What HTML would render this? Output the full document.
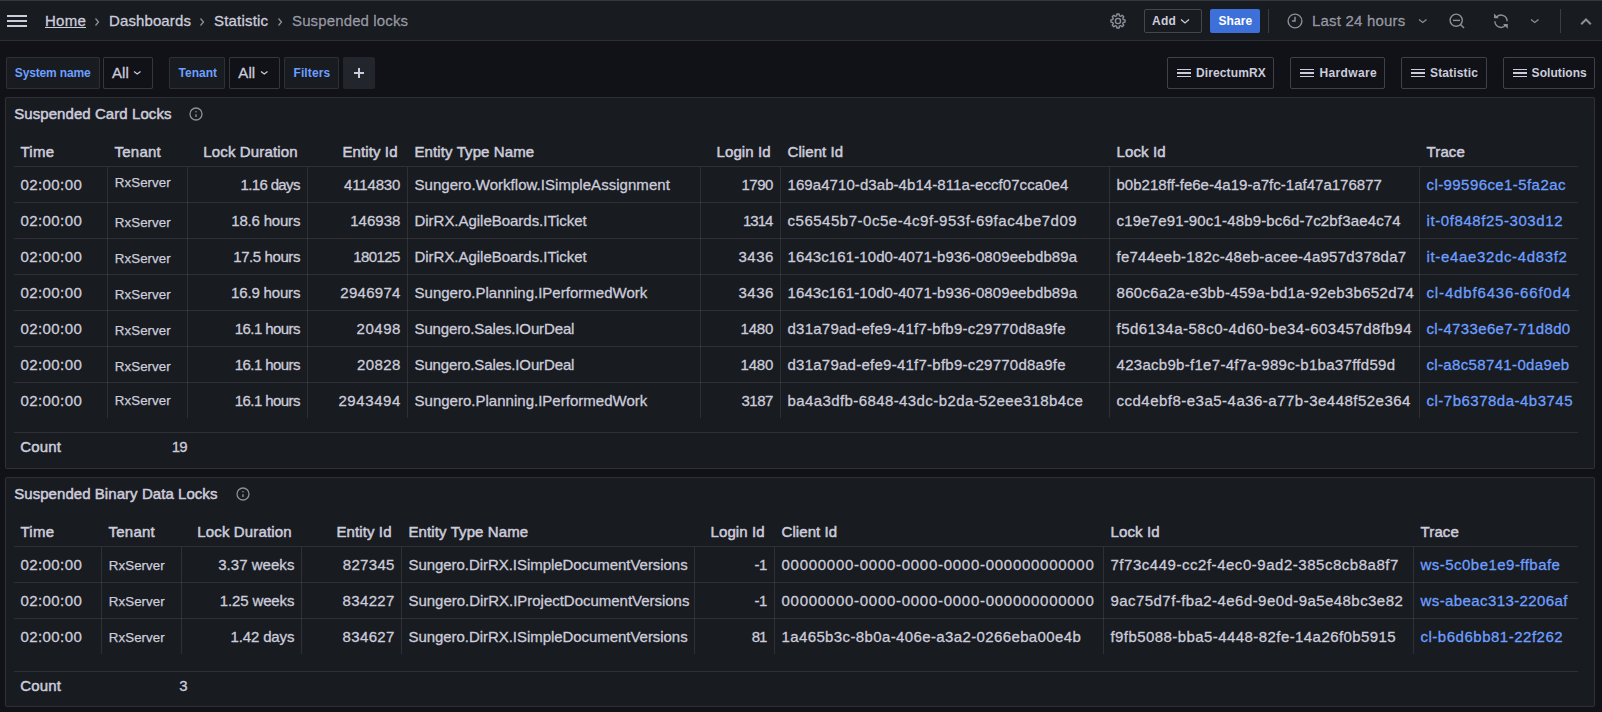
<!DOCTYPE html><html><head><meta charset="utf-8"><style>
html,body{margin:0;padding:0;}
body{width:1602px;height:712px;overflow:hidden;position:relative;background:#111217;font-family:"Liberation Sans",sans-serif;}
.t{position:absolute;line-height:normal;white-space:pre;}
svg{overflow:visible}
</style></head><body>
<div style="position:absolute;left:0px;top:0px;width:1602px;height:41px;background:#181b1f;"></div>
<div style="position:absolute;left:0px;top:0px;width:1602px;height:1px;background:#34373d;"></div>
<div style="position:absolute;left:0px;top:40px;width:1602px;height:1px;background:#2c2e33;"></div>
<div style="position:absolute;left:7px;top:15px;width:20px;height:2px;background:#ccccdc;"></div>
<div style="position:absolute;left:7px;top:20px;width:20px;height:2px;background:#ccccdc;"></div>
<div style="position:absolute;left:7px;top:25px;width:20px;height:2px;background:#ccccdc;"></div>
<div class="t" style="left:45.00px;top:12px;font-size:15px;font-weight:400;color:#ccccdc;letter-spacing:0.246px;-webkit-text-stroke:0.3px #ccccdc;text-decoration:underline;text-underline-offset:1px;text-decoration-thickness:1px;">Home</div>
<svg style="position:absolute;left:93px;top:17px" width="8" height="10" viewBox="0 0 8 10"><polyline points="2.5,1.5 5.5,5 2.5,8.5" fill="none" stroke="rgba(204,204,220,0.65)" stroke-width="1.3"/></svg>
<div class="t" style="left:109.00px;top:12px;font-size:15px;font-weight:400;color:#ccccdc;letter-spacing:0.111px;-webkit-text-stroke:0.3px #ccccdc;">Dashboards</div>
<svg style="position:absolute;left:198px;top:17px" width="8" height="10" viewBox="0 0 8 10"><polyline points="2.5,1.5 5.5,5 2.5,8.5" fill="none" stroke="rgba(204,204,220,0.65)" stroke-width="1.3"/></svg>
<div class="t" style="left:214.00px;top:12px;font-size:15px;font-weight:400;color:#ccccdc;letter-spacing:0.198px;-webkit-text-stroke:0.3px #ccccdc;">Statistic</div>
<svg style="position:absolute;left:276px;top:17px" width="8" height="10" viewBox="0 0 8 10"><polyline points="2.5,1.5 5.5,5 2.5,8.5" fill="none" stroke="rgba(204,204,220,0.65)" stroke-width="1.3"/></svg>
<div class="t" style="left:292.00px;top:12px;font-size:15px;font-weight:400;color:rgba(204,204,220,0.65);letter-spacing:0.130px;-webkit-text-stroke:0.3px rgba(204,204,220,0.65);">Suspended locks</div>
<svg style="position:absolute;left:1108px;top:11px" width="20" height="20" viewBox="0 0 20 20"><path d="M8.56,4.80 L8.93,2.98 L11.07,2.98 L11.44,4.80 L12.66,5.30 L14.21,4.28 L15.72,5.79 L14.70,7.34 L15.20,8.56 L17.02,8.93 L17.02,11.07 L15.20,11.44 L14.70,12.66 L15.72,14.21 L14.21,15.72 L12.66,14.70 L11.44,15.20 L11.07,17.02 L8.93,17.02 L8.56,15.20 L7.34,14.70 L5.79,15.72 L4.28,14.21 L5.30,12.66 L4.80,11.44 L2.98,11.07 L2.98,8.93 L4.80,8.56 L5.30,7.34 L4.28,5.79 L5.79,4.28 L7.34,5.30Z" fill="none" stroke="rgba(204,204,220,0.65)" stroke-width="1.4" stroke-linejoin="round"/><circle cx="10" cy="10" r="2.6" fill="none" stroke="rgba(204,204,220,0.65)" stroke-width="1.4"/></svg>
<div style="position:absolute;left:1144px;top:9px;width:58px;height:24px;box-sizing:border-box;border:1px solid rgba(204,204,220,0.25);border-radius:2px;"></div>
<div class="t" style="left:1152.00px;top:14px;font-size:12px;font-weight:700;color:#ccccdc;letter-spacing:0.224px;">Add</div>
<svg style="position:absolute;left:1180px;top:17.5px" width="10" height="6.5" viewBox="0 0 10 6.5"><polyline points="1,1.5 5.0,5.0 9,1.5" fill="none" stroke="#ccccdc" stroke-width="1.3"/></svg>
<div style="position:absolute;left:1210px;top:9px;width:50px;height:24px;background:#3d71d9;border-radius:2px;"></div>
<div class="t" style="left:1218.50px;top:14px;font-size:12px;font-weight:700;color:#ffffff;letter-spacing:0.108px;">Share</div>
<div style="position:absolute;left:1268px;top:9px;width:1px;height:24px;background:rgba(204,204,220,0.2);"></div>
<svg style="position:absolute;left:1285px;top:11px" width="20" height="20" viewBox="0 0 20 20"><circle cx="10" cy="10" r="6.9" fill="none" stroke="rgba(204,204,220,0.65)" stroke-width="1.4"/><polyline points="10,5.8 10,10 7,10" fill="none" stroke="rgba(204,204,220,0.65)" stroke-width="1.5"/></svg>
<div class="t" style="left:1312.00px;top:12px;font-size:15px;font-weight:400;color:rgba(204,204,220,0.65);letter-spacing:0.200px;-webkit-text-stroke:0.3px rgba(204,204,220,0.65);">Last 24 hours</div>
<svg style="position:absolute;left:1418px;top:18px" width="9.5" height="6" viewBox="0 0 9.5 6"><polyline points="1,1.5 4.75,4.5 8.5,1.5" fill="none" stroke="rgba(204,204,220,0.65)" stroke-width="1.3"/></svg>
<svg style="position:absolute;left:1446px;top:10px" width="22" height="22" viewBox="0 0 22 22"><circle cx="10.2" cy="10.2" r="6.1" fill="none" stroke="rgba(204,204,220,0.65)" stroke-width="1.4"/><line x1="7" y1="10.4" x2="14" y2="10.4" stroke="rgba(204,204,220,0.65)" stroke-width="1.4"/><line x1="14.8" y1="14.8" x2="18" y2="18" stroke="rgba(204,204,220,0.65)" stroke-width="1.5"/></svg>
<svg style="position:absolute;left:1491px;top:11px" width="20" height="20" viewBox="0 0 20 20"><path d="M5.7,5.8 A6.1,6.1 0 0 1 16.1,10.3" fill="none" stroke="rgba(204,204,220,0.65)" stroke-width="1.4"/><path d="M3.9,10.3 A6.1,6.1 0 0 0 14.3,14.6" fill="none" stroke="rgba(204,204,220,0.65)" stroke-width="1.4"/><polygon points="3,2.4 3,7.2 7.8,7.2" fill="rgba(204,204,220,0.65)"/><polygon points="16.8,17.8 16.8,13 12,13" fill="rgba(204,204,220,0.65)"/></svg>
<svg style="position:absolute;left:1530px;top:18px" width="9.5" height="6" viewBox="0 0 9.5 6"><polyline points="1,1.5 4.75,4.5 8.5,1.5" fill="none" stroke="rgba(204,204,220,0.65)" stroke-width="1.3"/></svg>
<div style="position:absolute;left:1560px;top:9px;width:1px;height:24px;background:rgba(204,204,220,0.2);"></div>
<svg style="position:absolute;left:1578px;top:16px" width="16" height="11" viewBox="0 0 16 11"><polyline points="3.2,8.3 8,3.5 12.8,8.3" fill="none" stroke="rgba(204,204,220,0.65)" stroke-width="2"/></svg>
<div style="position:absolute;left:6px;top:57px;width:94px;height:32px;box-sizing:border-box;background:#181b1f;border:1px solid rgba(204,204,220,0.12);border-radius:2px;"></div>
<div class="t" style="left:14.80px;top:66px;font-size:12px;font-weight:700;color:#6e9fff;letter-spacing:-0.152px;">System name</div>
<div style="position:absolute;left:103px;top:57px;width:50px;height:32px;box-sizing:border-box;background:#111217;border:1px solid rgba(204,204,220,0.20);border-radius:2px;"></div>
<div class="t" style="left:112.00px;top:64px;font-size:15px;font-weight:400;color:#ccccdc;letter-spacing:0.109px;-webkit-text-stroke:0.3px #ccccdc;">All</div>
<svg style="position:absolute;left:133px;top:70.3px" width="8.5" height="5.5" viewBox="0 0 8.5 5.5"><polyline points="1,1.5 4.25,4.0 7.5,1.5" fill="none" stroke="#ccccdc" stroke-width="1.2"/></svg>
<div style="position:absolute;left:169px;top:57px;width:56px;height:32px;box-sizing:border-box;background:#181b1f;border:1px solid rgba(204,204,220,0.12);border-radius:2px;"></div>
<div class="t" style="left:178.50px;top:66px;font-size:12px;font-weight:700;color:#6e9fff;letter-spacing:0.008px;">Tenant</div>
<div style="position:absolute;left:229px;top:57px;width:51px;height:32px;box-sizing:border-box;background:#111217;border:1px solid rgba(204,204,220,0.20);border-radius:2px;"></div>
<div class="t" style="left:238.30px;top:64px;font-size:15px;font-weight:400;color:#ccccdc;letter-spacing:0.109px;-webkit-text-stroke:0.3px #ccccdc;">All</div>
<svg style="position:absolute;left:260px;top:70.3px" width="8.5" height="5.5" viewBox="0 0 8.5 5.5"><polyline points="1,1.5 4.25,4.0 7.5,1.5" fill="none" stroke="#ccccdc" stroke-width="1.2"/></svg>
<div style="position:absolute;left:284px;top:57px;width:55px;height:32px;box-sizing:border-box;background:#181b1f;border:1px solid rgba(204,204,220,0.12);border-radius:2px;"></div>
<div class="t" style="left:293.50px;top:66px;font-size:12px;font-weight:700;color:#6e9fff;letter-spacing:0.098px;">Filters</div>
<div style="position:absolute;left:343px;top:57px;width:32px;height:32px;background:#22252b;border-radius:2px;"></div>
<div style="position:absolute;left:354px;top:72px;width:10px;height:2px;background:#ccccdc;"></div>
<div style="position:absolute;left:358px;top:68px;width:2px;height:10px;background:#ccccdc;"></div>
<div style="position:absolute;left:1167px;top:57px;width:107px;height:32px;box-sizing:border-box;border:1px solid rgba(204,204,220,0.25);border-radius:2px;"></div>
<div style="position:absolute;left:1177px;top:68.8px;width:14px;height:1.4px;background:#ccccdc;"></div>
<div style="position:absolute;left:1177px;top:72.3px;width:14px;height:1.4px;background:#ccccdc;"></div>
<div style="position:absolute;left:1177px;top:75.8px;width:14px;height:1.4px;background:#ccccdc;"></div>
<div class="t" style="left:1196.00px;top:66px;font-size:12px;font-weight:700;color:#ccccdc;letter-spacing:0.121px;">DirectumRX</div>
<div style="position:absolute;left:1290px;top:57px;width:95px;height:32px;box-sizing:border-box;border:1px solid rgba(204,204,220,0.25);border-radius:2px;"></div>
<div style="position:absolute;left:1300px;top:68.8px;width:14px;height:1.4px;background:#ccccdc;"></div>
<div style="position:absolute;left:1300px;top:72.3px;width:14px;height:1.4px;background:#ccccdc;"></div>
<div style="position:absolute;left:1300px;top:75.8px;width:14px;height:1.4px;background:#ccccdc;"></div>
<div class="t" style="left:1319.50px;top:66px;font-size:12px;font-weight:700;color:#ccccdc;letter-spacing:0.350px;">Hardware</div>
<div style="position:absolute;left:1401px;top:57px;width:86px;height:32px;box-sizing:border-box;border:1px solid rgba(204,204,220,0.25);border-radius:2px;"></div>
<div style="position:absolute;left:1411px;top:68.8px;width:14px;height:1.4px;background:#ccccdc;"></div>
<div style="position:absolute;left:1411px;top:72.3px;width:14px;height:1.4px;background:#ccccdc;"></div>
<div style="position:absolute;left:1411px;top:75.8px;width:14px;height:1.4px;background:#ccccdc;"></div>
<div class="t" style="left:1430.00px;top:66px;font-size:12px;font-weight:700;color:#ccccdc;letter-spacing:0.146px;">Statistic</div>
<div style="position:absolute;left:1503px;top:57px;width:92px;height:32px;box-sizing:border-box;border:1px solid rgba(204,204,220,0.25);border-radius:2px;"></div>
<div style="position:absolute;left:1513px;top:68.8px;width:14px;height:1.4px;background:#ccccdc;"></div>
<div style="position:absolute;left:1513px;top:72.3px;width:14px;height:1.4px;background:#ccccdc;"></div>
<div style="position:absolute;left:1513px;top:75.8px;width:14px;height:1.4px;background:#ccccdc;"></div>
<div class="t" style="left:1531.60px;top:66px;font-size:12px;font-weight:700;color:#ccccdc;letter-spacing:0.059px;">Solutions</div>
<div style="position:absolute;left:5px;top:97px;width:1590px;height:372px;box-sizing:border-box;background:#181b1f;border:1px solid rgba(204,204,220,0.12);border-radius:2px;"></div>
<div class="t" style="left:14.20px;top:105px;font-size:15px;font-weight:400;color:#ccccdc;letter-spacing:0.070px;-webkit-text-stroke:0.5px #ccccdc;">Suspended Card Locks</div>
<svg style="position:absolute;left:188px;top:106px" width="16" height="16" viewBox="0 0 16 16"><circle cx="8" cy="8" r="6" fill="none" stroke="rgba(204,204,220,0.65)" stroke-width="1.3"/><line x1="8" y1="8.2" x2="8" y2="11" stroke="rgba(204,204,220,0.65)" stroke-width="1.4"/><circle cx="8" cy="5.7" r="0.8" fill="rgba(204,204,220,0.65)"/></svg>
<div style="position:absolute;left:14px;top:166px;width:1564px;height:1px;background:rgba(204,204,220,0.12);"></div>
<div style="position:absolute;left:14px;top:202px;width:1564px;height:1px;background:rgba(204,204,220,0.12);"></div>
<div style="position:absolute;left:14px;top:238px;width:1564px;height:1px;background:rgba(204,204,220,0.12);"></div>
<div style="position:absolute;left:14px;top:274px;width:1564px;height:1px;background:rgba(204,204,220,0.12);"></div>
<div style="position:absolute;left:14px;top:310px;width:1564px;height:1px;background:rgba(204,204,220,0.12);"></div>
<div style="position:absolute;left:14px;top:346px;width:1564px;height:1px;background:rgba(204,204,220,0.12);"></div>
<div style="position:absolute;left:14px;top:382px;width:1564px;height:1px;background:rgba(204,204,220,0.12);"></div>
<div style="position:absolute;left:107px;top:167px;width:1px;height:251px;background:rgba(204,204,220,0.12);"></div>
<div style="position:absolute;left:187px;top:167px;width:1px;height:251px;background:rgba(204,204,220,0.12);"></div>
<div style="position:absolute;left:307px;top:167px;width:1px;height:251px;background:rgba(204,204,220,0.12);"></div>
<div style="position:absolute;left:407px;top:167px;width:1px;height:251px;background:rgba(204,204,220,0.12);"></div>
<div style="position:absolute;left:700px;top:167px;width:1px;height:251px;background:rgba(204,204,220,0.12);"></div>
<div style="position:absolute;left:780px;top:167px;width:1px;height:251px;background:rgba(204,204,220,0.12);"></div>
<div style="position:absolute;left:1109px;top:167px;width:1px;height:251px;background:rgba(204,204,220,0.12);"></div>
<div style="position:absolute;left:1419px;top:167px;width:1px;height:251px;background:rgba(204,204,220,0.12);"></div>
<div style="position:absolute;left:14px;top:432px;width:1564px;height:1px;background:rgba(204,204,220,0.12);"></div>
<div class="t" style="left:20.50px;top:143px;font-size:15px;font-weight:400;color:#ccccdc;letter-spacing:0.253px;-webkit-text-stroke:0.5px #ccccdc;">Time</div>
<div class="t" style="left:114.50px;top:143px;font-size:15px;font-weight:400;color:#ccccdc;letter-spacing:0.237px;-webkit-text-stroke:0.5px #ccccdc;">Tenant</div>
<div class="t" style="left:297.64px;top:143px;font-size:15px;font-weight:400;color:#ccccdc;letter-spacing:0.135px;transform:translateX(-100%);-webkit-text-stroke:0.5px #ccccdc;">Lock Duration</div>
<div class="t" style="left:397.61px;top:143px;font-size:15px;font-weight:400;color:#ccccdc;letter-spacing:0.114px;transform:translateX(-100%);-webkit-text-stroke:0.5px #ccccdc;">Entity Id</div>
<div class="t" style="left:414.50px;top:143px;font-size:15px;font-weight:400;color:#ccccdc;letter-spacing:0.103px;-webkit-text-stroke:0.5px #ccccdc;">Entity Type Name</div>
<div class="t" style="left:770.57px;top:143px;font-size:15px;font-weight:400;color:#ccccdc;letter-spacing:0.070px;transform:translateX(-100%);-webkit-text-stroke:0.5px #ccccdc;">Login Id</div>
<div class="t" style="left:787.50px;top:143px;font-size:15px;font-weight:400;color:#ccccdc;letter-spacing:0.075px;-webkit-text-stroke:0.5px #ccccdc;">Client Id</div>
<div class="t" style="left:1116.50px;top:143px;font-size:15px;font-weight:400;color:#ccccdc;letter-spacing:0.113px;-webkit-text-stroke:0.5px #ccccdc;">Lock Id</div>
<div class="t" style="left:1426.50px;top:143px;font-size:15px;font-weight:400;color:#ccccdc;letter-spacing:0.138px;-webkit-text-stroke:0.5px #ccccdc;">Trace</div>
<div class="t" style="left:20.50px;top:176px;font-size:15px;font-weight:400;color:#ccccdc;letter-spacing:0.411px;-webkit-text-stroke:0.3px #ccccdc;">02:00:00</div>
<div class="t" style="left:114.80px;top:175px;font-size:13.3px;font-weight:400;color:#ccccdc;letter-spacing:0.074px;-webkit-text-stroke:0.25px #ccccdc;">RxServer</div>
<div class="t" style="left:299.75px;top:176px;font-size:15px;font-weight:400;color:#ccccdc;letter-spacing:-0.649px;transform:translateX(-100%);-webkit-text-stroke:0.3px #ccccdc;">1.16 days</div>
<div class="t" style="left:400.24px;top:176px;font-size:15px;font-weight:400;color:#ccccdc;letter-spacing:-0.160px;transform:translateX(-100%);-webkit-text-stroke:0.3px #ccccdc;">4114830</div>
<div class="t" style="left:414.50px;top:176px;font-size:15px;font-weight:400;color:#ccccdc;letter-spacing:0.040px;-webkit-text-stroke:0.3px #ccccdc;">Sungero.Workflow.ISimpleAssignment</div>
<div class="t" style="left:772.92px;top:176px;font-size:15px;font-weight:400;color:#ccccdc;letter-spacing:-0.478px;transform:translateX(-100%);-webkit-text-stroke:0.3px #ccccdc;">1790</div>
<div class="t" style="left:787.50px;top:176px;font-size:15px;font-weight:400;color:#ccccdc;letter-spacing:0.073px;-webkit-text-stroke:0.3px #ccccdc;">169a4710-d3ab-4b14-811a-eccf07cca0e4</div>
<div class="t" style="left:1116.50px;top:176px;font-size:15px;font-weight:400;color:#ccccdc;letter-spacing:0.012px;-webkit-text-stroke:0.3px #ccccdc;">b0b218ff-fe6e-4a19-a7fc-1af47a176877</div>
<div class="t" style="left:1426.50px;top:176px;font-size:15px;font-weight:400;color:#6e9fff;letter-spacing:0.421px;-webkit-text-stroke:0.3px #6e9fff;">cl-99596ce1-5fa2ac</div>
<div class="t" style="left:20.50px;top:212px;font-size:15px;font-weight:400;color:#ccccdc;letter-spacing:0.411px;-webkit-text-stroke:0.3px #ccccdc;">02:00:00</div>
<div class="t" style="left:114.80px;top:215px;font-size:13.3px;font-weight:400;color:#ccccdc;letter-spacing:0.074px;-webkit-text-stroke:0.25px #ccccdc;">RxServer</div>
<div class="t" style="left:300.21px;top:212px;font-size:15px;font-weight:400;color:#ccccdc;letter-spacing:-0.192px;transform:translateX(-100%);-webkit-text-stroke:0.3px #ccccdc;">18.6 hours</div>
<div class="t" style="left:400.42px;top:212px;font-size:15px;font-weight:400;color:#ccccdc;letter-spacing:0.017px;transform:translateX(-100%);-webkit-text-stroke:0.3px #ccccdc;">146938</div>
<div class="t" style="left:414.50px;top:212px;font-size:15px;font-weight:400;color:#ccccdc;letter-spacing:-0.026px;-webkit-text-stroke:0.3px #ccccdc;">DirRX.AgileBoards.ITicket</div>
<div class="t" style="left:772.44px;top:212px;font-size:15px;font-weight:400;color:#ccccdc;letter-spacing:-0.961px;transform:translateX(-100%);-webkit-text-stroke:0.3px #ccccdc;">1314</div>
<div class="t" style="left:787.50px;top:212px;font-size:15px;font-weight:400;color:#ccccdc;letter-spacing:0.518px;-webkit-text-stroke:0.3px #ccccdc;">c56545b7-0c5e-4c9f-953f-69fac4be7d09</div>
<div class="t" style="left:1116.50px;top:212px;font-size:15px;font-weight:400;color:#ccccdc;letter-spacing:0.161px;-webkit-text-stroke:0.3px #ccccdc;">c19e7e91-90c1-48b9-bc6d-7c2bf3ae4c74</div>
<div class="t" style="left:1426.50px;top:212px;font-size:15px;font-weight:400;color:#6e9fff;letter-spacing:0.592px;-webkit-text-stroke:0.3px #6e9fff;">it-0f848f25-303d12</div>
<div class="t" style="left:20.50px;top:248px;font-size:15px;font-weight:400;color:#ccccdc;letter-spacing:0.411px;-webkit-text-stroke:0.3px #ccccdc;">02:00:00</div>
<div class="t" style="left:114.80px;top:251px;font-size:13.3px;font-weight:400;color:#ccccdc;letter-spacing:0.074px;-webkit-text-stroke:0.25px #ccccdc;">RxServer</div>
<div class="t" style="left:299.99px;top:248px;font-size:15px;font-weight:400;color:#ccccdc;letter-spacing:-0.414px;transform:translateX(-100%);-webkit-text-stroke:0.3px #ccccdc;">17.5 hours</div>
<div class="t" style="left:399.83px;top:248px;font-size:15px;font-weight:400;color:#ccccdc;letter-spacing:-0.573px;transform:translateX(-100%);-webkit-text-stroke:0.3px #ccccdc;">180125</div>
<div class="t" style="left:414.50px;top:248px;font-size:15px;font-weight:400;color:#ccccdc;letter-spacing:-0.026px;-webkit-text-stroke:0.3px #ccccdc;">DirRX.AgileBoards.ITicket</div>
<div class="t" style="left:773.95px;top:248px;font-size:15px;font-weight:400;color:#ccccdc;letter-spacing:0.545px;transform:translateX(-100%);-webkit-text-stroke:0.3px #ccccdc;">3436</div>
<div class="t" style="left:787.50px;top:248px;font-size:15px;font-weight:400;color:#ccccdc;letter-spacing:0.100px;-webkit-text-stroke:0.3px #ccccdc;">1643c161-10d0-4071-b936-0809eebdb89a</div>
<div class="t" style="left:1116.50px;top:248px;font-size:15px;font-weight:400;color:#ccccdc;letter-spacing:0.244px;-webkit-text-stroke:0.3px #ccccdc;">fe744eeb-182c-48eb-acee-4a957d378da7</div>
<div class="t" style="left:1426.50px;top:248px;font-size:15px;font-weight:400;color:#6e9fff;letter-spacing:0.651px;-webkit-text-stroke:0.3px #6e9fff;">it-e4ae32dc-4d83f2</div>
<div class="t" style="left:20.50px;top:284px;font-size:15px;font-weight:400;color:#ccccdc;letter-spacing:0.411px;-webkit-text-stroke:0.3px #ccccdc;">02:00:00</div>
<div class="t" style="left:114.80px;top:287px;font-size:13.3px;font-weight:400;color:#ccccdc;letter-spacing:0.074px;-webkit-text-stroke:0.25px #ccccdc;">RxServer</div>
<div class="t" style="left:300.22px;top:284px;font-size:15px;font-weight:400;color:#ccccdc;letter-spacing:-0.179px;transform:translateX(-100%);-webkit-text-stroke:0.3px #ccccdc;">16.9 hours</div>
<div class="t" style="left:400.69px;top:284px;font-size:15px;font-weight:400;color:#ccccdc;letter-spacing:0.286px;transform:translateX(-100%);-webkit-text-stroke:0.3px #ccccdc;">2946974</div>
<div class="t" style="left:414.50px;top:284px;font-size:15px;font-weight:400;color:#ccccdc;letter-spacing:0.014px;-webkit-text-stroke:0.3px #ccccdc;">Sungero.Planning.IPerformedWork</div>
<div class="t" style="left:773.95px;top:284px;font-size:15px;font-weight:400;color:#ccccdc;letter-spacing:0.545px;transform:translateX(-100%);-webkit-text-stroke:0.3px #ccccdc;">3436</div>
<div class="t" style="left:787.50px;top:284px;font-size:15px;font-weight:400;color:#ccccdc;letter-spacing:0.100px;-webkit-text-stroke:0.3px #ccccdc;">1643c161-10d0-4071-b936-0809eebdb89a</div>
<div class="t" style="left:1116.50px;top:284px;font-size:15px;font-weight:400;color:#ccccdc;letter-spacing:0.321px;-webkit-text-stroke:0.3px #ccccdc;">860c6a2a-e3bb-459a-bd1a-92eb3b652d74</div>
<div class="t" style="left:1426.50px;top:284px;font-size:15px;font-weight:400;color:#6e9fff;letter-spacing:0.851px;-webkit-text-stroke:0.3px #6e9fff;">cl-4dbf6436-66f0d4</div>
<div class="t" style="left:20.50px;top:320px;font-size:15px;font-weight:400;color:#ccccdc;letter-spacing:0.411px;-webkit-text-stroke:0.3px #ccccdc;">02:00:00</div>
<div class="t" style="left:114.80px;top:323px;font-size:13.3px;font-weight:400;color:#ccccdc;letter-spacing:0.074px;-webkit-text-stroke:0.25px #ccccdc;">RxServer</div>
<div class="t" style="left:299.81px;top:320px;font-size:15px;font-weight:400;color:#ccccdc;letter-spacing:-0.595px;transform:translateX(-100%);-webkit-text-stroke:0.3px #ccccdc;">16.1 hours</div>
<div class="t" style="left:400.94px;top:320px;font-size:15px;font-weight:400;color:#ccccdc;letter-spacing:0.541px;transform:translateX(-100%);-webkit-text-stroke:0.3px #ccccdc;">20498</div>
<div class="t" style="left:414.50px;top:320px;font-size:15px;font-weight:400;color:#ccccdc;letter-spacing:-0.126px;-webkit-text-stroke:0.3px #ccccdc;">Sungero.Sales.IOurDeal</div>
<div class="t" style="left:773.24px;top:320px;font-size:15px;font-weight:400;color:#ccccdc;letter-spacing:-0.164px;transform:translateX(-100%);-webkit-text-stroke:0.3px #ccccdc;">1480</div>
<div class="t" style="left:787.50px;top:320px;font-size:15px;font-weight:400;color:#ccccdc;letter-spacing:0.247px;-webkit-text-stroke:0.3px #ccccdc;">d31a79ad-efe9-41f7-bfb9-c29770d8a9fe</div>
<div class="t" style="left:1116.50px;top:320px;font-size:15px;font-weight:400;color:#ccccdc;letter-spacing:0.494px;-webkit-text-stroke:0.3px #ccccdc;">f5d6134a-58c0-4d60-be34-603457d8fb94</div>
<div class="t" style="left:1426.50px;top:320px;font-size:15px;font-weight:400;color:#6e9fff;letter-spacing:0.357px;-webkit-text-stroke:0.3px #6e9fff;">cl-4733e6e7-71d8d0</div>
<div class="t" style="left:20.50px;top:356px;font-size:15px;font-weight:400;color:#ccccdc;letter-spacing:0.411px;-webkit-text-stroke:0.3px #ccccdc;">02:00:00</div>
<div class="t" style="left:114.80px;top:359px;font-size:13.3px;font-weight:400;color:#ccccdc;letter-spacing:0.074px;-webkit-text-stroke:0.25px #ccccdc;">RxServer</div>
<div class="t" style="left:299.81px;top:356px;font-size:15px;font-weight:400;color:#ccccdc;letter-spacing:-0.595px;transform:translateX(-100%);-webkit-text-stroke:0.3px #ccccdc;">16.1 hours</div>
<div class="t" style="left:400.83px;top:356px;font-size:15px;font-weight:400;color:#ccccdc;letter-spacing:0.433px;transform:translateX(-100%);-webkit-text-stroke:0.3px #ccccdc;">20828</div>
<div class="t" style="left:414.50px;top:356px;font-size:15px;font-weight:400;color:#ccccdc;letter-spacing:-0.126px;-webkit-text-stroke:0.3px #ccccdc;">Sungero.Sales.IOurDeal</div>
<div class="t" style="left:773.24px;top:356px;font-size:15px;font-weight:400;color:#ccccdc;letter-spacing:-0.164px;transform:translateX(-100%);-webkit-text-stroke:0.3px #ccccdc;">1480</div>
<div class="t" style="left:787.50px;top:356px;font-size:15px;font-weight:400;color:#ccccdc;letter-spacing:0.247px;-webkit-text-stroke:0.3px #ccccdc;">d31a79ad-efe9-41f7-bfb9-c29770d8a9fe</div>
<div class="t" style="left:1116.50px;top:356px;font-size:15px;font-weight:400;color:#ccccdc;letter-spacing:0.293px;-webkit-text-stroke:0.3px #ccccdc;">423acb9b-f1e7-4f7a-989c-b1ba37ffd59d</div>
<div class="t" style="left:1426.50px;top:356px;font-size:15px;font-weight:400;color:#6e9fff;letter-spacing:0.349px;-webkit-text-stroke:0.3px #6e9fff;">cl-a8c58741-0da9eb</div>
<div class="t" style="left:20.50px;top:392px;font-size:15px;font-weight:400;color:#ccccdc;letter-spacing:0.411px;-webkit-text-stroke:0.3px #ccccdc;">02:00:00</div>
<div class="t" style="left:114.80px;top:393px;font-size:13.3px;font-weight:400;color:#ccccdc;letter-spacing:0.074px;-webkit-text-stroke:0.25px #ccccdc;">RxServer</div>
<div class="t" style="left:299.81px;top:392px;font-size:15px;font-weight:400;color:#ccccdc;letter-spacing:-0.595px;transform:translateX(-100%);-webkit-text-stroke:0.3px #ccccdc;">16.1 hours</div>
<div class="t" style="left:401.00px;top:392px;font-size:15px;font-weight:400;color:#ccccdc;letter-spacing:0.601px;transform:translateX(-100%);-webkit-text-stroke:0.3px #ccccdc;">2943494</div>
<div class="t" style="left:414.50px;top:392px;font-size:15px;font-weight:400;color:#ccccdc;letter-spacing:0.014px;-webkit-text-stroke:0.3px #ccccdc;">Sungero.Planning.IPerformedWork</div>
<div class="t" style="left:772.91px;top:392px;font-size:15px;font-weight:400;color:#ccccdc;letter-spacing:-0.493px;transform:translateX(-100%);-webkit-text-stroke:0.3px #ccccdc;">3187</div>
<div class="t" style="left:787.50px;top:392px;font-size:15px;font-weight:400;color:#ccccdc;letter-spacing:0.407px;-webkit-text-stroke:0.3px #ccccdc;">ba4a3dfb-6848-43dc-b2da-52eee318b4ce</div>
<div class="t" style="left:1116.50px;top:392px;font-size:15px;font-weight:400;color:#ccccdc;letter-spacing:0.487px;-webkit-text-stroke:0.3px #ccccdc;">ccd4ebf8-e3a5-4a36-a77b-3e448f52e364</div>
<div class="t" style="left:1426.50px;top:392px;font-size:15px;font-weight:400;color:#6e9fff;letter-spacing:0.492px;-webkit-text-stroke:0.3px #6e9fff;">cl-7b6378da-4b3745</div>
<div class="t" style="left:20.20px;top:438px;font-size:15px;font-weight:400;color:#ccccdc;letter-spacing:0.175px;-webkit-text-stroke:0.5px #ccccdc;">Count</div>
<div class="t" style="left:186.46px;top:438px;font-size:15px;font-weight:400;color:#ccccdc;letter-spacing:-1.041px;transform:translateX(-100%);-webkit-text-stroke:0.3px #ccccdc;">19</div>
<div style="position:absolute;left:5px;top:477px;width:1590px;height:230px;box-sizing:border-box;background:#181b1f;border:1px solid rgba(204,204,220,0.12);border-radius:2px;"></div>
<div class="t" style="left:14.20px;top:485px;font-size:15px;font-weight:400;color:#ccccdc;letter-spacing:0.055px;-webkit-text-stroke:0.5px #ccccdc;">Suspended Binary Data Locks</div>
<svg style="position:absolute;left:235px;top:486px" width="16" height="16" viewBox="0 0 16 16"><circle cx="8" cy="8" r="6" fill="none" stroke="rgba(204,204,220,0.65)" stroke-width="1.3"/><line x1="8" y1="8.2" x2="8" y2="11" stroke="rgba(204,204,220,0.65)" stroke-width="1.4"/><circle cx="8" cy="5.7" r="0.8" fill="rgba(204,204,220,0.65)"/></svg>
<div style="position:absolute;left:14px;top:546px;width:1564px;height:1px;background:rgba(204,204,220,0.12);"></div>
<div style="position:absolute;left:14px;top:582px;width:1564px;height:1px;background:rgba(204,204,220,0.12);"></div>
<div style="position:absolute;left:14px;top:618px;width:1564px;height:1px;background:rgba(204,204,220,0.12);"></div>
<div style="position:absolute;left:101px;top:547px;width:1px;height:107px;background:rgba(204,204,220,0.12);"></div>
<div style="position:absolute;left:181px;top:547px;width:1px;height:107px;background:rgba(204,204,220,0.12);"></div>
<div style="position:absolute;left:301px;top:547px;width:1px;height:107px;background:rgba(204,204,220,0.12);"></div>
<div style="position:absolute;left:401px;top:547px;width:1px;height:107px;background:rgba(204,204,220,0.12);"></div>
<div style="position:absolute;left:694px;top:547px;width:1px;height:107px;background:rgba(204,204,220,0.12);"></div>
<div style="position:absolute;left:774px;top:547px;width:1px;height:107px;background:rgba(204,204,220,0.12);"></div>
<div style="position:absolute;left:1103px;top:547px;width:1px;height:107px;background:rgba(204,204,220,0.12);"></div>
<div style="position:absolute;left:1413px;top:547px;width:1px;height:107px;background:rgba(204,204,220,0.12);"></div>
<div style="position:absolute;left:14px;top:671px;width:1564px;height:1px;background:rgba(204,204,220,0.12);"></div>
<div class="t" style="left:20.50px;top:523px;font-size:15px;font-weight:400;color:#ccccdc;letter-spacing:0.253px;-webkit-text-stroke:0.5px #ccccdc;">Time</div>
<div class="t" style="left:108.50px;top:523px;font-size:15px;font-weight:400;color:#ccccdc;letter-spacing:0.237px;-webkit-text-stroke:0.5px #ccccdc;">Tenant</div>
<div class="t" style="left:291.64px;top:523px;font-size:15px;font-weight:400;color:#ccccdc;letter-spacing:0.135px;transform:translateX(-100%);-webkit-text-stroke:0.5px #ccccdc;">Lock Duration</div>
<div class="t" style="left:391.61px;top:523px;font-size:15px;font-weight:400;color:#ccccdc;letter-spacing:0.114px;transform:translateX(-100%);-webkit-text-stroke:0.5px #ccccdc;">Entity Id</div>
<div class="t" style="left:408.50px;top:523px;font-size:15px;font-weight:400;color:#ccccdc;letter-spacing:0.103px;-webkit-text-stroke:0.5px #ccccdc;">Entity Type Name</div>
<div class="t" style="left:764.57px;top:523px;font-size:15px;font-weight:400;color:#ccccdc;letter-spacing:0.070px;transform:translateX(-100%);-webkit-text-stroke:0.5px #ccccdc;">Login Id</div>
<div class="t" style="left:781.50px;top:523px;font-size:15px;font-weight:400;color:#ccccdc;letter-spacing:0.075px;-webkit-text-stroke:0.5px #ccccdc;">Client Id</div>
<div class="t" style="left:1110.50px;top:523px;font-size:15px;font-weight:400;color:#ccccdc;letter-spacing:0.113px;-webkit-text-stroke:0.5px #ccccdc;">Lock Id</div>
<div class="t" style="left:1420.50px;top:523px;font-size:15px;font-weight:400;color:#ccccdc;letter-spacing:0.138px;-webkit-text-stroke:0.5px #ccccdc;">Trace</div>
<div class="t" style="left:20.50px;top:556px;font-size:15px;font-weight:400;color:#ccccdc;letter-spacing:0.411px;-webkit-text-stroke:0.3px #ccccdc;">02:00:00</div>
<div class="t" style="left:108.80px;top:558px;font-size:13.3px;font-weight:400;color:#ccccdc;letter-spacing:0.074px;-webkit-text-stroke:0.25px #ccccdc;">RxServer</div>
<div class="t" style="left:294.43px;top:556px;font-size:15px;font-weight:400;color:#ccccdc;letter-spacing:0.035px;transform:translateX(-100%);-webkit-text-stroke:0.3px #ccccdc;">3.37 weeks</div>
<div class="t" style="left:394.70px;top:556px;font-size:15px;font-weight:400;color:#ccccdc;letter-spacing:0.300px;transform:translateX(-100%);-webkit-text-stroke:0.3px #ccccdc;">827345</div>
<div class="t" style="left:408.50px;top:556px;font-size:15px;font-weight:400;color:#ccccdc;letter-spacing:-0.050px;-webkit-text-stroke:0.3px #ccccdc;">Sungero.DirRX.ISimpleDocumentVersions</div>
<div class="t" style="left:766.89px;top:556px;font-size:15px;font-weight:400;color:#ccccdc;letter-spacing:-0.511px;transform:translateX(-100%);-webkit-text-stroke:0.3px #ccccdc;">-1</div>
<div class="t" style="left:781.50px;top:556px;font-size:15px;font-weight:400;color:#ccccdc;letter-spacing:0.724px;-webkit-text-stroke:0.3px #ccccdc;">00000000-0000-0000-0000-000000000000</div>
<div class="t" style="left:1110.50px;top:556px;font-size:15px;font-weight:400;color:#ccccdc;letter-spacing:0.529px;-webkit-text-stroke:0.3px #ccccdc;">7f73c449-cc2f-4ec0-9ad2-385c8cb8a8f7</div>
<div class="t" style="left:1420.50px;top:556px;font-size:15px;font-weight:400;color:#6e9fff;letter-spacing:0.469px;-webkit-text-stroke:0.3px #6e9fff;">ws-5c0be1e9-ffbafe</div>
<div class="t" style="left:20.50px;top:592px;font-size:15px;font-weight:400;color:#ccccdc;letter-spacing:0.411px;-webkit-text-stroke:0.3px #ccccdc;">02:00:00</div>
<div class="t" style="left:108.80px;top:594px;font-size:13.3px;font-weight:400;color:#ccccdc;letter-spacing:0.074px;-webkit-text-stroke:0.25px #ccccdc;">RxServer</div>
<div class="t" style="left:294.25px;top:592px;font-size:15px;font-weight:400;color:#ccccdc;letter-spacing:-0.146px;transform:translateX(-100%);-webkit-text-stroke:0.3px #ccccdc;">1.25 weeks</div>
<div class="t" style="left:394.74px;top:592px;font-size:15px;font-weight:400;color:#ccccdc;letter-spacing:0.345px;transform:translateX(-100%);-webkit-text-stroke:0.3px #ccccdc;">834227</div>
<div class="t" style="left:408.50px;top:592px;font-size:15px;font-weight:400;color:#ccccdc;letter-spacing:-0.024px;-webkit-text-stroke:0.3px #ccccdc;">Sungero.DirRX.IProjectDocumentVersions</div>
<div class="t" style="left:766.89px;top:592px;font-size:15px;font-weight:400;color:#ccccdc;letter-spacing:-0.511px;transform:translateX(-100%);-webkit-text-stroke:0.3px #ccccdc;">-1</div>
<div class="t" style="left:781.50px;top:592px;font-size:15px;font-weight:400;color:#ccccdc;letter-spacing:0.724px;-webkit-text-stroke:0.3px #ccccdc;">00000000-0000-0000-0000-000000000000</div>
<div class="t" style="left:1110.50px;top:592px;font-size:15px;font-weight:400;color:#ccccdc;letter-spacing:0.439px;-webkit-text-stroke:0.3px #ccccdc;">9ac75d7f-fba2-4e6d-9e0d-9a5e48bc3e82</div>
<div class="t" style="left:1420.50px;top:592px;font-size:15px;font-weight:400;color:#6e9fff;letter-spacing:0.408px;-webkit-text-stroke:0.3px #6e9fff;">ws-abeac313-2206af</div>
<div class="t" style="left:20.50px;top:628px;font-size:15px;font-weight:400;color:#ccccdc;letter-spacing:0.411px;-webkit-text-stroke:0.3px #ccccdc;">02:00:00</div>
<div class="t" style="left:108.80px;top:630px;font-size:13.3px;font-weight:400;color:#ccccdc;letter-spacing:0.074px;-webkit-text-stroke:0.25px #ccccdc;">RxServer</div>
<div class="t" style="left:294.25px;top:628px;font-size:15px;font-weight:400;color:#ccccdc;letter-spacing:-0.152px;transform:translateX(-100%);-webkit-text-stroke:0.3px #ccccdc;">1.42 days</div>
<div class="t" style="left:394.77px;top:628px;font-size:15px;font-weight:400;color:#ccccdc;letter-spacing:0.368px;transform:translateX(-100%);-webkit-text-stroke:0.3px #ccccdc;">834627</div>
<div class="t" style="left:408.50px;top:628px;font-size:15px;font-weight:400;color:#ccccdc;letter-spacing:-0.050px;-webkit-text-stroke:0.3px #ccccdc;">Sungero.DirRX.ISimpleDocumentVersions</div>
<div class="t" style="left:766.34px;top:628px;font-size:15px;font-weight:400;color:#ccccdc;letter-spacing:-1.056px;transform:translateX(-100%);-webkit-text-stroke:0.3px #ccccdc;">81</div>
<div class="t" style="left:781.50px;top:628px;font-size:15px;font-weight:400;color:#ccccdc;letter-spacing:0.377px;-webkit-text-stroke:0.3px #ccccdc;">1a465b3c-8b0a-406e-a3a2-0266eba00e4b</div>
<div class="t" style="left:1110.50px;top:628px;font-size:15px;font-weight:400;color:#ccccdc;letter-spacing:0.428px;-webkit-text-stroke:0.3px #ccccdc;">f9fb5088-bba5-4448-82fe-14a26f0b5915</div>
<div class="t" style="left:1420.50px;top:628px;font-size:15px;font-weight:400;color:#6e9fff;letter-spacing:0.511px;-webkit-text-stroke:0.3px #6e9fff;">cl-b6d6bb81-22f262</div>
<div class="t" style="left:20.20px;top:677px;font-size:15px;font-weight:400;color:#ccccdc;letter-spacing:0.175px;-webkit-text-stroke:0.5px #ccccdc;">Count</div>
<div class="t" style="left:187.50px;top:677px;font-size:15px;font-weight:400;color:#ccccdc;transform:translateX(-100%);-webkit-text-stroke:0.3px #ccccdc;">3</div>
</body></html>
